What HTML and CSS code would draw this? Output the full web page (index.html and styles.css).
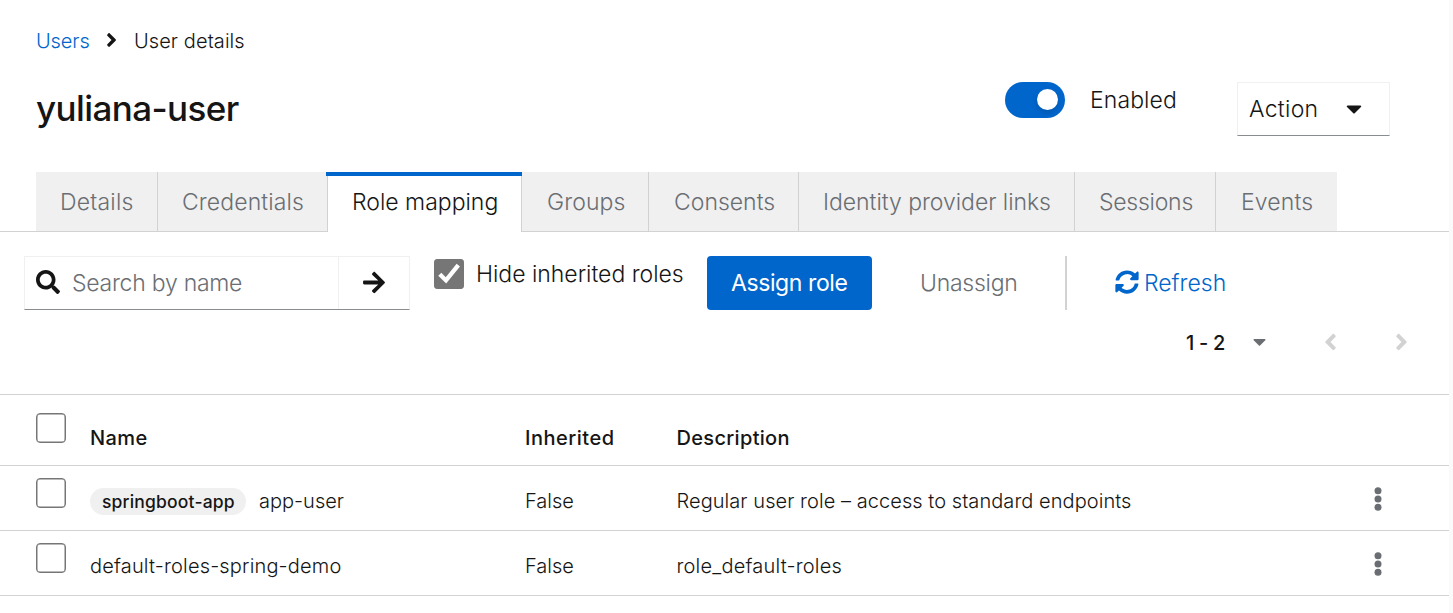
FILE: index.html
```html
<!DOCTYPE html>
<html lang="en">
<head>
<meta charset="utf-8">
<title>User details</title>
<link rel="stylesheet" href="styles.css">
</head>
<body>
<svg class="defs" aria-hidden="true">
  <symbol id="search" viewBox="0 0 512 512"><path d="M505 442.7L405.3 343c-4.5-4.5-10.6-7-17-7H372c27.6-35.3 44-79.7 44-128C416 93.1 322.9 0 208 0S0 93.1 0 208s93.1 208 208 208c48.3 0 92.7-16.4 128-44v16.3c0 6.4 2.5 12.5 7 17l99.7 99.7c9.4 9.4 24.6 9.4 33.9 0l28.3-28.3c9.4-9.4 9.4-24.6.1-34zM208 336c-70.7 0-128-57.2-128-128 0-70.7 57.2-128 128-128 70.7 0 128 57.2 128 128 0 70.7-57.2 128-128 128z"/></symbol>
  <symbol id="arrow" viewBox="0 0 448 512"><path d="M190.5 66.9l22.2-22.2c9.4-9.4 24.6-9.4 33.9 0L441 239c9.4 9.4 9.4 24.6 0 33.9L246.6 467.3c-9.4 9.4-24.6 9.4-33.9 0l-22.2-22.2c-9.5-9.5-9.3-25 .4-34.3L311.4 296H24c-13.3 0-24-10.7-24-24v-32c0-13.3 10.7-24 24-24h287.4L190.9 101.2c-9.8-9.3-10-24.8-.4-34.3z"/></symbol>
  <symbol id="sync" viewBox="0 0 512 512"><path d="M370.72 133.28C339.458 104.008 298.888 87.962 255.848 88c-77.458.068-144.328 53.178-162.791 126.85-1.344 5.363-6.122 9.15-11.651 9.15H24.103c-7.498 0-13.194-6.807-11.807-14.176C33.933 94.924 134.813 8 256 8c66.448 0 126.791 26.136 171.315 68.685L463.03 40.97C478.149 25.851 504 36.559 504 57.941V192c0 13.255-10.745 24-24 24H345.941c-21.382 0-32.09-25.851-16.971-40.971l41.75-41.749zM32 296h134.059c21.382 0 32.09 25.851 16.971 40.971l-41.75 41.75c31.262 29.273 71.835 45.319 114.876 45.28 77.418-.07 144.315-53.144 162.787-126.849 1.344-5.363 6.122-9.15 11.651-9.15h57.304c7.498 0 13.194 6.807 11.807 14.176C478.067 417.076 377.187 504 256 504c-66.448 0-126.791-26.136-171.315-68.685L48.97 471.03C33.851 486.149 8 475.441 8 454.059V320c0-13.255 10.745-24 24-24z"/></symbol>
  <symbol id="angle" viewBox="0 0 256 512"><path d="M224.3 273l-136 136c-9.4 9.4-24.6 9.4-33.9 0l-22.6-22.6c-9.4-9.4-9.4-24.6 0-33.9l96.4-96.4-96.4-96.4c-9.4-9.4-9.4-24.6 0-33.9L54.3 103c9.4-9.4 24.6-9.4 33.9 0l136 136c9.5 9.4 9.5 24.6.1 34z"/></symbol>
  <symbol id="caret" viewBox="0 0 320 512"><path d="M31.3 192h257.3c17.8 0 26.7 21.5 14.1 34.1L174.1 354.8c-7.8 7.8-20.5 7.8-28.3 0L17.2 226.1C4.6 213.5 13.5 192 31.3 192z"/></symbol>
  <symbol id="kebab" viewBox="0 0 8 24"><circle cx="4" cy="3.7" r="3.5"/><circle cx="4" cy="12" r="3.5"/><circle cx="4" cy="20.3" r="3.5"/></symbol>
</svg>
<main class="page">
  <nav class="breadcrumb">
    <a class="crumb-link">Users</a>
    <svg class="crumb-sep"><use href="#angle"/></svg>
    <span class="crumb-current">User details</span>
  </nav>
  <header class="title-row">
    <h1 class="title">yuliana-user</h1>
    <span class="switch"><span class="knob"></span></span>
    <span class="switch-label">Enabled</span>
    <button class="action"><span class="action-text">Action</span><svg class="action-caret"><use href="#caret"/></svg></button>
  </header>
  <div class="tabs">
    <div class="tab t-details"><span>Details</span></div>
    <div class="tab t-cred"><span>Credentials</span></div>
    <div class="tab t-role active"><span>Role mapping</span></div>
    <div class="tab t-groups"><span>Groups</span></div>
    <div class="tab t-consents"><span>Consents</span></div>
    <div class="tab t-idp"><span>Identity provider links</span></div>
    <div class="tab t-sessions"><span>Sessions</span></div>
    <div class="tab t-events"><span>Events</span></div>
  </div>
  <div class="toolbar">
    <div class="search">
      <div class="search-field"><svg class="i-search"><use href="#search"/></svg><span class="placeholder">Search by name</span></div>
      <div class="search-go"><svg class="i-arrow"><use href="#arrow"/></svg></div>
    </div>
    <div class="hide-roles">
      <span class="checkbox checked"><svg viewBox="0 0 30 30"><path d="M5.8 15.2 12 21.4 24.3 6.2" fill="none" stroke="#fff" stroke-width="4.3"/></svg></span>
      <span class="hide-label">Hide inherited roles</span>
    </div>
    <button class="assign"><span>Assign role</span></button>
    <span class="unassign">Unassign</span>
    <span class="divider"></span>
    <a class="refresh"><svg class="i-sync"><use href="#sync"/></svg><span class="refresh-text">Refresh</span></a>
  </div>
  <div class="pagination">
    <span class="range">1 - 2</span>
    <svg class="range-caret"><use href="#caret"/></svg>
    <svg class="page-arrow prev"><use href="#angle"/></svg>
    <svg class="page-arrow"><use href="#angle"/></svg>
  </div>
  <section class="table">
    <div class="row head">
      <span class="checkbox"></span>
      <span class="cell h-name">Name</span>
      <span class="cell h-inh">Inherited</span>
      <span class="cell h-desc">Description</span>
      <span></span>
    </div>
    <div class="row">
      <span class="checkbox"></span>
      <span class="cell"><span class="badge">springboot-app</span><span class="c-app">app-user</span></span>
      <span class="cell c-false">False</span>
      <span class="cell c-regular">Regular user role – access to standard endpoints</span>
      <svg class="kebab"><use href="#kebab"/></svg>
    </div>
    <div class="row">
      <span class="checkbox"></span>
      <span class="cell c-default">default-roles-spring-demo</span>
      <span class="cell c-false">False</span>
      <span class="cell c-role">role_default-roles</span>
      <svg class="kebab"><use href="#kebab"/></svg>
    </div>
  </section>
</main>
</body>
</html>
```
FILE: styles.css
```css
* { box-sizing: border-box; }
body {
  margin: 0;
  background: #fafafa;
  color: #151515;
  font-family: Inter, "Open Sans", sans-serif;
  font-weight: 300;
  font-size: 23px;
  line-height: 36px;
}
svg { display: block; fill: currentColor; flex: none; }
button { font: inherit; color: inherit; border: 0; padding: 0; text-align: left; }
.defs { display: none; }
.page { width: 1449px; height: 613px; background: #fff; overflow: hidden; white-space: nowrap; }

.breadcrumb { display: flex; align-items: center; height: 36px; margin: 23px 0 0 36px; font-size: 20px; }
.crumb-link { width: 70px; color: #06c; letter-spacing: -.1px; }
.crumb-current { letter-spacing: .08px; }
.crumb-sep { width: 11px; height: 22px; margin: 0 17px 3px 0; }

.title-row { display: flex; height: 113px; padding-left: 36px; }
.title { margin: 31px 0 0; width: 969px; font-size: 35px; font-weight: 450; line-height: 36px; letter-spacing: -.6px; }
.switch { width: 60px; height: 36px; margin-top: 23px; padding: 7px 7px 0 32px; border-radius: 18px; background: #06c; }
.knob { display: block; width: 21px; height: 21px; border-radius: 50%; background: #fff; box-shadow: 0 3px 6px rgba(3, 3, 3, .15); }
.switch-label { width: 147px; margin: 23px 0 0 25px; letter-spacing: .1px; }
.action {
  display: flex; align-items: center; width: 153px; height: 54px; margin-top: 23px; padding-left: 11px;
  background: #fff; border: 1px solid #f0f0f0; border-bottom-color: #8a8d90;
}
.action-text { width: 97px; letter-spacing: .3px; }
.action-caret { width: 16px; height: 25px; margin-bottom: 2px; }

.tabs { display: flex; height: 60px; padding-left: 36px; color: #6a6e73; box-shadow: inset 0 -1px #d2d2d2; }
.tab { position: relative; display: flex; padding: 12px 0 0 24px; background: #f0f0f0; border-right: 1px solid #d2d2d2; border-bottom: 1px solid #d2d2d2; }
.tab.active { margin-left: -1px; background: #fff; color: #151515; border-bottom: 0; border-left: 1px solid #d2d2d2; }
.tab.active::before { content: ""; position: absolute; top: 0; left: -2px; right: -1px; height: 4px; background: #06c; }
.t-details { width: 122px; letter-spacing: .2px; }
.t-cred { width: 170px; letter-spacing: .1px; }
.t-role { width: 195px; }
.t-groups { width: 127px; padding-left: 25px; letter-spacing: .1px; }
.t-consents { width: 150px; padding-left: 25px; }
.t-idp { width: 276px; letter-spacing: -.04px; }
.t-sessions { width: 141px; letter-spacing: -.25px; }
.t-events { width: 121px; padding-left: 25px; border-right: 0; letter-spacing: .15px; }

.toolbar { display: flex; height: 78px; padding: 24px 0 0 24px; }
.search { display: flex; width: 386px; height: 54px; border: 1px solid #f0f0f0; border-bottom-color: #8a8d90; }
.search-field { display: flex; align-items: center; width: 314px; padding-left: 11px; gap: 12px; color: #6a6e73; border-right: 1px solid #f0f0f0; }
.i-search { width: 24px; height: 24px; margin-bottom: 2px; color: #151515; }
.placeholder { letter-spacing: -.25px; }
.search-go { display: flex; align-items: center; padding-left: 24px; }
.i-arrow { width: 22px; height: 25px; margin-bottom: 2px; }
.hide-roles { display: flex; flex: none; width: 297px; padding-left: 24px; gap: 12px; }
.hide-label { letter-spacing: -.02px; }
.checkbox { flex: none; width: 30px; height: 30px; border: 1.5px solid #767676; box-shadow: inset 0 0 0 .5px #767676; border-radius: 4px; background: #fff; }
.checkbox.checked { margin-top: 3px; border: 0; background: #767676; }
.assign { width: 165px; height: 54px; border-radius: 4px; background: #06c; color: #fff; padding-left: 24px; font-weight: 400; letter-spacing: -.4px; }
.unassign { width: 193px; padding: 9px 0 0 48px; color: #6a6e73; letter-spacing: -.25px; }
.divider { width: 2px; height: 54px; background: #d2d2d2; }
.refresh { display: flex; height: 54px; align-items: center; margin-left: 48px; gap: 5px; color: #06c; }
.i-sync { width: 24px; height: 24px; margin-bottom: 2px; }

.pagination { display: flex; align-items: center; height: 64px; padding-left: 1186px; font-size: 20px; font-weight: 500; }
.range { flex: none; width: 67px; padding-top: 1px; letter-spacing: -.3px; }
.range-caret { width: 13px; height: 21px; margin: 0 58px 1px 0; color: #6a6e73; }
.page-arrow { width: 13px; height: 26px; margin-right: 58px; color: #d2d2d2; }
.prev { transform: scaleX(-1); }

.table { margin-top: 20px; border-top: 1px solid #d2d2d2; font-size: 20px; }
.row { display: grid; grid-template-columns: 54px 435px 151.5px 697.5px 8px; height: 65px; padding: 12px 0 0 36px; border-bottom: 1px solid #d2d2d2; }
.row.head { height: 71px; padding-top: 18px; font-weight: 500; }
.cell { display: flex; padding-top: 5px; }
.head .cell { padding-top: 7px; }
.h-name { letter-spacing: .4px; }
.h-inh { letter-spacing: .5px; }
.h-desc { letter-spacing: .32px; }
.c-regular { letter-spacing: .06px; }
.c-default { letter-spacing: .17px; }
.c-role { letter-spacing: .2px; }
.badge { height: 27px; width: 156px; margin: 5px 13px 0 0; padding-left: 12px; border-radius: 14px; background: #f0f0f0; font-size: 17.5px; font-weight: 500; line-height: 27px; letter-spacing: .18px; }
.kebab { width: 8px; height: 24px; margin-top: 9px; color: #6a6e73; }
```
